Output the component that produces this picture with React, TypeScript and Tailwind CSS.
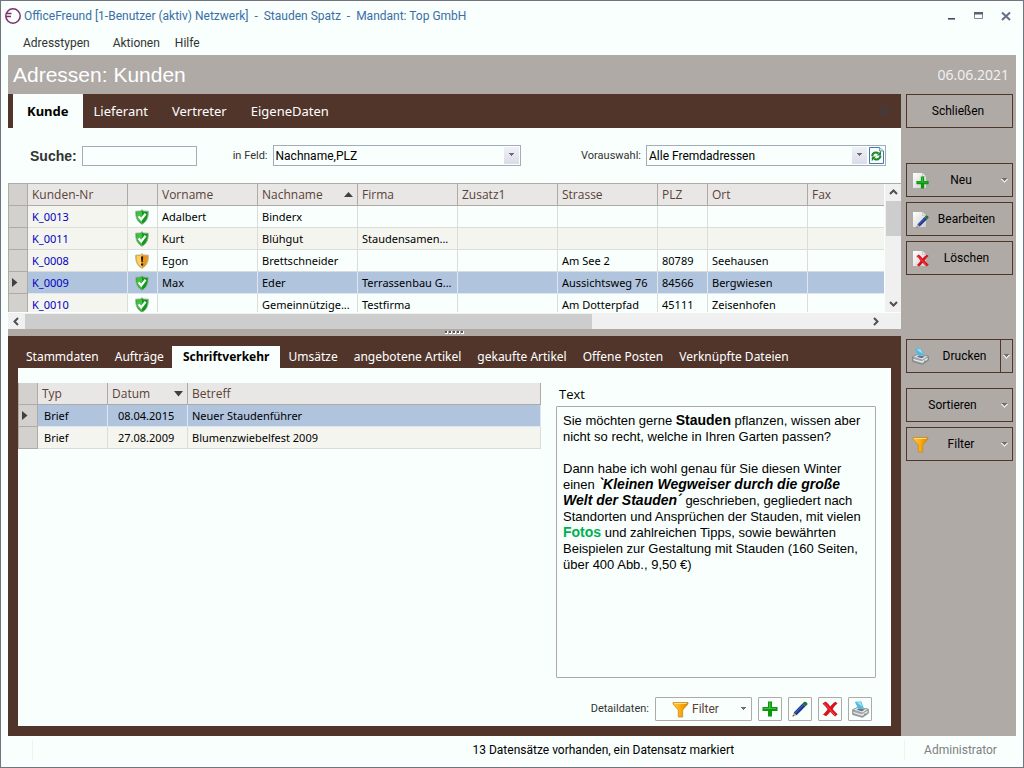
import { useState } from "react";
import type { ReactNode } from "react";

const customers = [
  { nr: "K_0013", ok: true, vorname: "Adalbert", nachname: "Binderx", firma: "", strasse: "", plz: "", ort: "" },
  { nr: "K_0011", ok: true, vorname: "Kurt", nachname: "Blühgut", firma: "Staudensamen...", strasse: "", plz: "", ort: "" },
  { nr: "K_0008", ok: false, vorname: "Egon", nachname: "Brettschneider", firma: "", strasse: "Am See 2", plz: "80789", ort: "Seehausen" },
  { nr: "K_0009", ok: true, vorname: "Max", nachname: "Eder", firma: "Terrassenbau G...", strasse: "Aussichtsweg 76", plz: "84566", ort: "Bergwiesen" },
  { nr: "K_0010", ok: true, vorname: "", nachname: "Gemeinnützige...", firma: "Testfirma", strasse: "Am Dotterpfad", plz: "45111", ort: "Zeisenhofen" },
];

const letters = [
  { typ: "Brief", datum: "08.04.2015", betreff: "Neuer Staudenführer" },
  { typ: "Brief", datum: "27.08.2009", betreff: "Blumenzwiebelfest 2009" },
];

const mainTabs = ["Kunde", "Lieferant", "Vertreter", "EigeneDaten"];
const detailTabs = [
  "Stammdaten",
  "Aufträge",
  "Schriftverkehr",
  "Umsätze",
  "angebotene Artikel",
  "gekaufte Artikel",
  "Offene Posten",
  "Verknüpfte Dateien",
];

function Logo() {
  return (
    <svg width="16" height="16" viewBox="0 0 16 16" fill="none" stroke="#7d3070" strokeWidth="1.5">
      <circle cx="8" cy="8" r="7.2" />
      <path d="M1.500 5.500H6.500M1 8.500H6" strokeWidth="1.4" />
    </svg>
  );
}

function Shield({ ok }: { ok: boolean }) {
  return (
    <svg className="mx-auto block" width="14" height="16" viewBox="0 0 14 16">
      <path
        d="M7 .7 8.6 2 13.3 2.2C13.4 8 12.5 12.2 7 15.3 1.5 12.2.6 8 .7 2.2L5.4 2Z"
        fill={ok ? "#0f9a1a" : "#e8951a"}
        stroke={ok ? "#a5b5a5" : "#c3b08c"}
      />
      <path d="M7 1.800 5.800 2.800 1.600 3C1.600 8 2.300 11.800 7 14.400Z" fill={ok ? "#43c044" : "#fbd060"} />
      {ok ? (
        <path d="M3.600 7.400 6.200 10.400 10.600 4.800" fill="none" stroke="#fff" strokeWidth="2.200" />
      ) : (
        <path d="M5.900 3.500h2.300l-.5 5.700H6.400ZM6 10.400h2.100v2H6Z" fill="#1b1408" />
      )}
    </svg>
  );
}

function Plus() {
  return (
    <svg width="16" height="16" viewBox="0 0 16 16">
      <path d="M6 .5h4V6h5.500v4H10v5.500H6V10H.5V6H6Z" fill="#0a960f" />
      <path d="M7 1.500h1.500V7H14v1H1.500V7H7Z" fill="#3fbd3c" />
    </svg>
  );
}

function Pencil() {
  return (
    <svg width="16" height="16" viewBox="0 0 16 16">
      <path d="M.5 15.500 1.800 11.600 4.600 14.200Z" fill="#c9a878" />
      <path d="M.5 15.500 1 14 2.200 15Z" fill="#222" />
      <path d="M1.800 11.600 10.500 2.500 13.500 5.300 4.600 14.200Z" fill="#1c3590" />
      <path d="M3 12.400 11.500 3.600" stroke="#5575cc" />
      <path d="M10.500 2.500 12.300.8C14 .1 16.200 2.200 15.200 3.700L13.500 5.300Z" fill="#1d7430" />
    </svg>
  );
}

function Cross() {
  return (
    <svg width="16" height="16" viewBox="0 0 16 16">
      <path
        d="M.5 2.700 3.300.6C5.500 2 6.900 3.800 8.200 5.400 10 3.300 11.500 1.800 13.500.8L15.500 2.500C13.500 4 12 6 10.700 8c1.600 2 3 3.600 5 5.300l-2.600 2.200C11.200 14 9.700 12.500 8.300 10.700 7 12.500 5.600 14 4 15.300L1 13.500C3 12 4.300 10.200 5.600 8.200 4 6 2.500 4.200.5 2.700Z"
        fill="#d9131c"
      />
      <path d="M2 2.600C5 4.500 8.500 9.500 13 14" stroke="#f0575a" fill="none" />
    </svg>
  );
}

function OnPage({ children }: { children: ReactNode }) {
  return (
    <svg width="17" height="17" viewBox="0 0 17 17">
      <defs>
        <linearGradient id="page" x1="0" y1="0" x2="1" y2="1">
          <stop offset="0" stopColor="#fff" />
          <stop offset="1" stopColor="#cfcfcf" />
        </linearGradient>
      </defs>
      <path d="M1 1h9.500L14 4.500V16H1Z" fill="url(#page)" />
      <path d="M10.500 1v3.500H14" fill="#e4e4e4" stroke="#bbb" strokeWidth=".6" />
      <svg x="4" y="4" width="13" height="13" viewBox="0 0 16 16">
        {children}
      </svg>
    </svg>
  );
}

function Printer() {
  return (
    <svg width="17" height="17" viewBox="0 0 17 17">
      <path d="M.7 8.800 6 6.300 16.300 8.300V12.300L10.500 16.300.7 13.500Z" fill="#a4a8ae" stroke="#6d7279" strokeWidth=".7" />
      <path d="M.7 8.800 6 6.300 16.300 8.300 10.500 12Z" fill="#e4e6e9" stroke="#85898f" strokeWidth=".6" />
      <path d="M4.500 8.700 7.500 7.400 13 8.500 9.800 10.300Z" fill="#6b7078" />
      <path d="M2.800.8 9.300.5 11.800 7.300 6.300 8Z" fill="#4fbbe0" />
      <path d="M4.500 1.500 8.700 1.300 10.300 5.500Z" fill="#a9e3f3" />
      <path d="M1.500 11.500 10 14 15.500 10.500" stroke="#eceef0" strokeWidth="1.300" fill="none" />
      <path d="M12 13.200h1.500" stroke="#3aa33a" />
    </svg>
  );
}

function Funnel() {
  return (
    <svg width="17" height="17" viewBox="0 0 17 17">
      <defs>
        <linearGradient id="gold" x1="0" x2="1">
          <stop offset="0" stopColor="#ffc93a" />
          <stop offset=".45" stopColor="#ffae0d" />
          <stop offset="1" stopColor="#dd8200" />
        </linearGradient>
      </defs>
      <path d="M1 1.500h15v1.500L10.700 9v7H6.300V9L1 3Z" fill="url(#gold)" stroke="#c78a26" strokeWidth=".8" />
      <path d="M2.500 2.500h12" stroke="#ffe08a" />
    </svg>
  );
}

function Refresh() {
  return (
    <svg width="15" height="17" viewBox="0 0 15 17">
      <path d="M.5.500h10L14.500 4v12.500H.5Z" fill="#fafcff" stroke="#4a78a8" />
      <path d="M10.500.5V4h4" fill="#d4e2f2" stroke="#4a78a8" strokeWidth=".7" />
      <g fill="none" stroke="#1c8a24" strokeWidth="2.200">
        <path d="M3.200 9C3.500 5.800 6.500 4.600 9.500 6.300" />
        <path d="M11.500 8.800C11.300 12 8 13.400 5.200 11.800" />
      </g>
      <path d="M12 3.800v4.700H7.800ZM2.800 14.200V9.500H7Z" fill="#1c8a24" />
    </svg>
  );
}

function Down({ light = false }: { light?: boolean }) {
  return (
    <svg className="shrink-0" width="7" height="5" viewBox="0 0 7 5" shapeRendering="crispEdges">
      {light && <path d="M0 1h7v1H6v1H5v1H4v1H3V4H2V3H1V2H0Z" fill="#e4e2e0" />}
      <path d="M1 0h5v1h-1v1H4v1H3V2H2V1H1Z" fill="#6c6e76" />
    </svg>
  );
}

function RowMarker() {
  return (
    <svg className="ml-[3px] block" width="6" height="9" viewBox="0 0 6 9">
      <path d="M0 0 5.500 4.500 0 9Z" fill="#404040" />
    </svg>
  );
}

function Chevron({ d }: { d: string }) {
  return (
    <svg width="9" height="9" viewBox="0 0 9 9" fill="none" stroke="#505050" strokeWidth="2">
      <path d={d} />
    </svg>
  );
}

function SideButton({ label, icon, menu }: { label: string; icon?: ReactNode; menu?: boolean }) {
  return (
    <button className="flex h-[34px] w-full items-center border border-[#51352b] pr-1 pl-[5px] text-black">
      {icon && <span className="w-[17px] shrink-0">{icon}</span>}
      <span className="flex-1 pr-1 text-center">{label}</span>
      {menu && (
        <span className="pl-1">
          <Down light />
        </span>
      )}
    </button>
  );
}

function Combo({ id, options, width, children }: { id: string; options: string[]; width: string; children?: ReactNode }) {
  return (
    <div className={`flex h-[21px] items-center border border-[#a3adb8] pr-px ${width}`}>
      <select id={id} className="h-full min-w-0 flex-1 appearance-none bg-transparent pl-0.5 text-black outline-none">
        {options.map((o) => (
          <option key={o}>{o}</option>
        ))}
      </select>
      <span className="pointer-events-none flex h-[17px] w-[15px] items-center justify-center bg-linear-to-b from-[#f0f0f6] to-[#dcdce8]">
        <Down />
      </span>
      {children}
    </div>
  );
}

const headCell = "border-r border-b border-[#b0aaa7] bg-[#e9e7e5] px-1 text-left font-normal text-[#5a4238]";
const markCell = "border-r border-b border-[#b0aaa7] bg-[#d3d1cd] p-0";

export default function App() {
  const [mainTab, setMainTab] = useState("Kunde");
  const [detailTab, setDetailTab] = useState("Schriftverkehr");
  const [selected, setSelected] = useState("K_0009");
  const [letter, setLetter] = useState(0);

  return (
    <div className="flex min-h-screen flex-col border border-[#73737f] bg-[#f8fffc] font-['Roboto',sans-serif] text-[12px] leading-4 text-[#333]">
      <header>
        <div className="flex h-[30px] items-center pr-3 pl-1">
          <Logo />
          <h1 className="ml-[3px] flex-1 whitespace-pre text-[#3a6ea8]">
            OfficeFreund [1-Benutzer (aktiv) Netzwerk]  -  Stauden Spatz  -  Mandant: Top GmbH
          </h1>
          <div className="flex items-center gap-[18px]">
            <button aria-label="Minimieren">
              <svg width="9" height="10" viewBox="0 0 9 10">
                <path d="M1 7h7v1H1Z" fill="#444b58" />
                <path d="M1 8h7v1H1Z" fill="#8a94a8" />
              </svg>
            </button>
            <button aria-label="Maximieren">
              <svg width="9" height="10" viewBox="0 0 9 10">
                <path d="M.5 2.500h8v5h-8Z" fill="none" stroke="#7d88a0" />
                <path d="M0 1h9v2.500H0Z" fill="#5a6070" />
              </svg>
            </button>
            <button aria-label="Fenster schließen">
              <svg width="10" height="10" viewBox="0 0 10 10">
                <path d="M1 1.500 9 9M9 1.500 1 9" stroke="#66708a" strokeWidth="2" />
              </svg>
            </button>
          </div>
        </div>
        <nav className="flex h-6 items-center pl-[22px]">
          <button className="mr-[23px]">Adresstypen</button>
          <button className="mr-[15px]">Aktionen</button>
          <button>Hilfe</button>
        </nav>
      </header>

      <main className="mx-[7px] flex flex-1 flex-col bg-[#b0aaa7]">
        <div className="flex h-[39px] items-center justify-between pr-[7px] pl-[5px] text-white">
          <h2 className="font-['Liberation_Sans',sans-serif] text-[21px]">Adressen: Kunden</h2>
          <span className="font-['Open_Sans',sans-serif] text-[14px] text-[#f2f2f2]">06.06.2021</span>
        </div>

        <div className="flex flex-1">
          <div className="flex min-w-0 flex-1 flex-col">
            <div className="flex h-[34px] items-stretch bg-[#51352b] pr-3 pl-[5px] font-['Noto_Sans',sans-serif] text-[13px] text-white">
              {mainTabs.map((t) => (
                <button
                  key={t}
                  onClick={() => setMainTab(t)}
                  className={t === mainTab ? "bg-[#f8fffc] px-3.5 font-bold text-black" : "pr-[13px] pl-[11px]"}
                >
                  {t}
                </button>
              ))}
              <span className="ml-auto flex items-center">
                <svg width="8" height="9" viewBox="0 0 8 9" fill="#3b3e48">
                  <path d="M0 0h8v1.500H0ZM2.500 3h3v1.500H8L4 9 0 4.500h2.500Z" />
                </svg>
              </span>
            </div>

            <div className="flex h-[55px] items-center bg-[#f8fffc] pr-[15px] pl-[22px]">
              <label htmlFor="suche" className="font-['Liberation_Sans',sans-serif] text-[14px] font-bold">
                Suche:
              </label>
              <input id="suche" className="ml-[5px] h-5 w-[115px] border border-[#a3adb8] bg-transparent px-1 outline-none" />
              <label htmlFor="feld" className="mr-[5px] ml-9 text-[11px]">
                in Feld:
              </label>
              <Combo id="feld" width="w-[248px]" options={["Nachname,PLZ", "Firma", "Ort"]} />
              <label htmlFor="vorauswahl" className="mr-[5px] ml-auto text-[11px]">
                Vorauswahl:
              </label>
              <Combo id="vorauswahl" width="w-[240px]" options={["Alle Fremdadressen", "Alle Adressen"]}>
                <button className="ml-0.5" aria-label="Aktualisieren">
                  <Refresh />
                </button>
              </Combo>
            </div>

            <div className="border-t border-[#b0aaa7] bg-[#f8fffc]">
              <div className="flex h-32">
                <div className="min-w-0 flex-1 overflow-hidden">
                  <table className="w-full table-fixed border-separate border-spacing-0 font-['Open_Sans',sans-serif]">
                    <colgroup>
                      <col className="w-5" />
                      <col className="w-[100px]" />
                      <col className="w-[30px]" />
                      <col className="w-[100px]" />
                      <col className="w-[100px]" />
                      <col className="w-[100px]" />
                      <col className="w-[100px]" />
                      <col className="w-[100px]" />
                      <col className="w-[50px]" />
                      <col className="w-[100px]" />
                      <col />
                    </colgroup>
                    <thead>
                      <tr className="h-[22px]">
                        <th className={`${markCell} border-l`} />
                        <th className={headCell}>Kunden-Nr</th>
                        <th className={headCell} />
                        <th className={headCell}>Vorname</th>
                        <th className={headCell}>
                          <span className="flex items-center justify-between">
                            Nachname
                            <svg width="9" height="5" viewBox="0 0 9 5">
                              <path d="M0 5 4.500 0 9 5Z" fill="#404040" />
                            </svg>
                          </span>
                        </th>
                        <th className={headCell}>Firma</th>
                        <th className={headCell}>Zusatz1</th>
                        <th className={headCell}>Strasse</th>
                        <th className={headCell}>PLZ</th>
                        <th className={headCell}>Ort</th>
                        <th className={`${headCell} border-r-0`}>Fax</th>
                      </tr>
                    </thead>
                    <tbody className="font-['Noto_Sans',sans-serif] text-[11px] text-black">
                      {customers.map((c, i) => {
                        const active = c.nr === selected;
                        const tone = active ? "bg-[#b0c4de] border-[#dfe6f2]" : i % 2 ? "bg-[#f5f5ef] border-[#dcdcd9]" : "border-[#dcdcd9]";
                        const cell = `border-r border-b py-0 whitespace-nowrap overflow-hidden ${tone}`;
                        return (
                          <tr key={c.nr} className="h-[22px]" onClick={() => setSelected(c.nr)}>
                            <td className={`${markCell} border-l`}>{active && <RowMarker />}</td>
                            <td className={`${cell} px-1 text-[#0000c0] ${active ? "" : "bg-[#f5f5ef]"}`}>{c.nr}</td>
                            <td className={`${cell} pr-0.5 pl-0`}>
                              <Shield ok={c.ok} />
                            </td>
                            <td className={`${cell} px-1`}>{c.vorname}</td>
                            <td className={`${cell} px-1`}>{c.nachname}</td>
                            <td className={`${cell} px-1`}>{c.firma}</td>
                            <td className={cell} />
                            <td className={`${cell} px-1`}>{c.strasse}</td>
                            <td className={`${cell} px-1`}>{c.plz}</td>
                            <td className={`${cell} px-1`}>{c.ort}</td>
                            <td className={`${cell} border-r-0`} />
                          </tr>
                        );
                      })}
                    </tbody>
                  </table>
                </div>
                <div className="ml-px flex w-4 flex-col items-center bg-[#f0f0f0]">
                  <span className="flex h-[17px] items-center">
                    <Chevron d="M1 6 4.500 2.500 8 6" />
                  </span>
                  <span className="h-[35px] w-[15px] bg-[#cdcdcd]" />
                  <span className="mt-auto flex h-[17px] items-center">
                    <Chevron d="M1 3 4.500 6.500 8 3" />
                  </span>
                </div>
              </div>
              <div className="flex h-[17px] items-center border-t border-[#f8fffc] bg-[#f0f0f0] pr-[21px]">
                <span className="flex w-[17px] justify-center">
                  <Chevron d="M6 1 2.500 4.500 6 8" />
                </span>
                <span className="flex-1">
                  <span className="block h-[15px] w-[67%] bg-[#cdcdcd]" />
                </span>
                <Chevron d="M3 1 6.500 4.500 3 8" />
              </div>
            </div>

            <div className="flex h-[7px] items-center justify-center gap-px">
              {[0, 1, 2, 3, 4].map((n) => (
                <span key={n} className="size-[3px] border-r border-b border-white bg-[#5c5552]" />
              ))}
            </div>

            <div className="flex flex-1 flex-col bg-[#51352b] px-2.5 pt-2.5 pb-2.5">
              <div className="flex h-[22px] items-stretch font-['Noto_Sans',sans-serif] text-white">
                {detailTabs.map((t) => (
                  <button
                    key={t}
                    onClick={() => setDetailTab(t)}
                    className={t === detailTab ? "bg-[#f8fffc] px-[11px] font-bold text-black" : "px-2"}
                  >
                    {t}
                  </button>
                ))}
              </div>

              <div className="flex flex-1 gap-[15px] bg-[#f8fffc] pr-[15px]">
                <div className="min-w-0 flex-1 pt-[15px]">
                  <table className="w-full table-fixed border-separate border-spacing-0 font-['Open_Sans',sans-serif]">
                    <colgroup>
                      <col className="w-5" />
                      <col className="w-[70px]" />
                      <col className="w-[80px]" />
                      <col />
                    </colgroup>
                    <thead>
                      <tr className="h-[22px]">
                        <th className={`${markCell} border-l`} />
                        <th className={headCell}>Typ</th>
                        <th className={headCell}>
                          <span className="flex items-center justify-between">
                            Datum
                            <svg width="9" height="6" viewBox="0 0 9 6">
                              <path d="M0 0 4.500 5.500 9 0Z" fill="#404040" />
                            </svg>
                          </span>
                        </th>
                        <th className={headCell}>Betreff</th>
                      </tr>
                    </thead>
                    <tbody className="font-['Noto_Sans',sans-serif] text-[11px] text-black">
                      {letters.map((l, i) => {
                        const cell = `border-r border-b py-0 ${i === letter ? "bg-[#b0c4de] border-[#dfe6f2]" : "bg-[#f5f5ef] border-[#dcdcd9]"}`;
                        return (
                          <tr key={l.datum} className="h-[22px]" onClick={() => setLetter(i)}>
                            <td className={`${markCell} border-l`}>{i === letter && <RowMarker />}</td>
                            <td className={`${cell} px-1.5`}>{l.typ}</td>
                            <td className={`${cell} px-2.5`}>{l.datum}</td>
                            <td className={`${cell} px-1`}>{l.betreff}</td>
                          </tr>
                        );
                      })}
                    </tbody>
                  </table>
                </div>

                <div className="flex w-80 flex-col pt-[18px] pb-[5px]">
                  <h3 className="h-5 pl-[3px] font-['Open_Sans',sans-serif] text-[13px] text-black">Text</h3>
                  <article className="min-h-0 flex-1 rounded-[1px] border border-[#b0aaa7] px-1.5 py-1.5 font-['Liberation_Sans',sans-serif] text-[13px] leading-4 whitespace-nowrap text-black">
                    <p>
                      Sie möchten gerne <b className="text-[14px] leading-none">Stauden</b> pflanzen, wissen aber
                      <br />
                      nicht so recht, welche in Ihren Garten passen?
                    </p>
                    <p className="mt-4">
                      Dann habe ich wohl genau für Sie diesen Winter
                      <br />
                      einen{" "}
                      <b className="text-[14px] leading-none italic">
                        `Kleinen Wegweiser durch die große
                        <br />
                        Welt der Stauden´
                      </b>{" "}
                      geschrieben, gegliedert nach
                      <br />
                      Standorten und Ansprüchen der Stauden, mit vielen
                      <br />
                      <b className="text-[14px] leading-none text-[#00b050]">Fotos</b> und zahlreichen Tipps, sowie bewährten
                      <br />
                      Beispielen zur Gestaltung mit Stauden (160 Seiten,
                      <br />
                      über 400 Abb., 9,50 €)
                    </p>
                  </article>
                  <div className="mt-[19px] mr-1 flex items-center justify-end gap-1.5">
                    <span className="text-[11px]">Detaildaten:</span>
                    <button className="flex h-6 w-[97px] items-center rounded-[1px] border border-[#b0aaa7] pr-1 pl-4 text-[#5a4238]">
                      <Funnel />
                      <span className="ml-[3px] flex-1 text-left">Filter</span>
                      <Down />
                    </button>
                    {[
                      { name: "Neu", icon: <Plus /> },
                      { name: "Bearbeiten", icon: <Pencil /> },
                      { name: "Löschen", icon: <Cross /> },
                      { name: "Drucken", icon: <Printer /> },
                    ].map((b) => (
                      <button
                        key={b.name}
                        aria-label={b.name}
                        className="flex size-6 items-center justify-center rounded-[1px] border border-[#b0aaa7]"
                      >
                        {b.icon}
                      </button>
                    ))}
                  </div>
                </div>
              </div>
            </div>
          </div>

          <aside className="flex w-[115px] flex-col pr-[3px] pl-[5px]">
            <SideButton label="Schließen" />
            <div className="mt-[35px] flex flex-col gap-[5px]">
              <SideButton label="Neu" menu icon={<OnPage><Plus /></OnPage>} />
              <SideButton label="Bearbeiten" icon={<OnPage><Pencil /></OnPage>} />
              <SideButton label="Löschen" icon={<OnPage><Cross /></OnPage>} />
            </div>
            <div className="mt-16 flex h-[34px] border border-[#51352b] text-black">
              <button className="flex flex-1 items-center pl-[5px]">
                <Printer />
                <span className="flex-1 text-center">Drucken</span>
              </button>
              <button className="flex w-3 items-center justify-center border-l border-[#51352b]" aria-label="Druckoptionen">
                <Down light />
              </button>
            </div>
            <div className="mt-[15px] flex flex-col gap-[5px]">
              <SideButton label="Sortieren" menu />
              <SideButton label="Filter" menu icon={<Funnel />} />
            </div>
          </aside>
        </div>
      </main>

      <footer className="flex h-[31px] items-center px-[7px] pb-1">
        <span className="h-5 w-[25px] border-r border-[#f3f1ee]" />
        <span className="flex-1" />
        <span className="flex-1 pl-2 text-black">13 Datensätze vorhanden, ein Datensatz markiert</span>
        <span className="h-5 w-28 border-l border-[#f3f1ee] pt-0.5 text-center text-[#808080]">Administrator</span>
      </footer>
    </div>
  );
}
